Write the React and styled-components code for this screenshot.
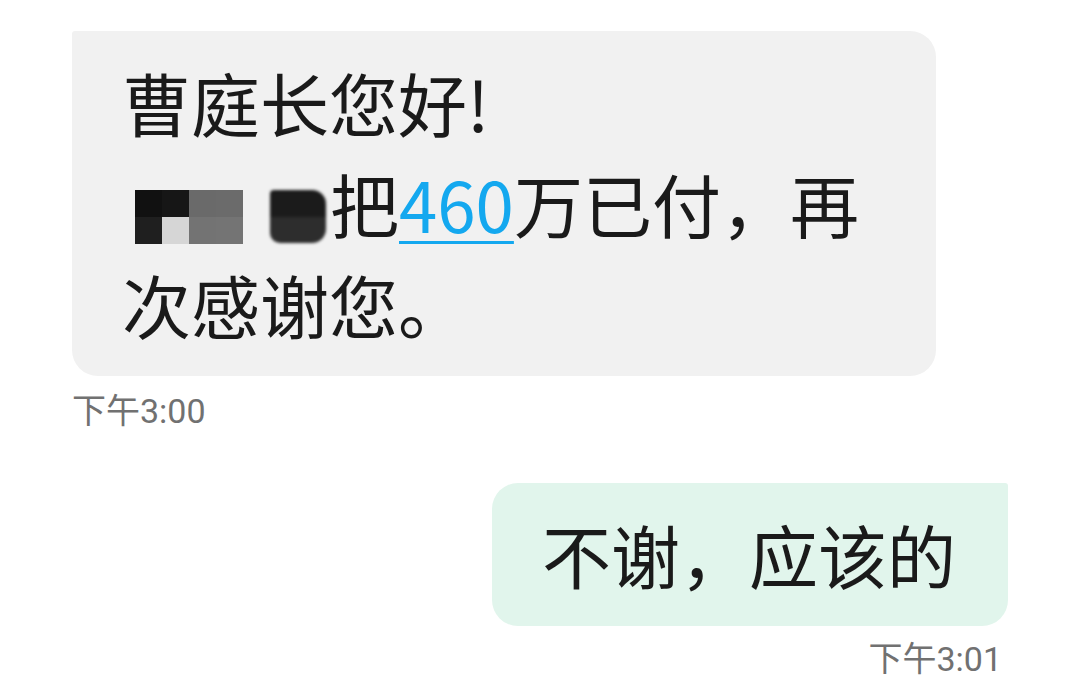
import React from 'react';
import styled, { createGlobalStyle } from 'styled-components';

const GlobalStyle = createGlobalStyle`
    html, body {
        margin: 0;
        padding: 0;
        background: #fff;
    }
    body {
        font-family: "Noto Sans CJK SC", "Noto Sans", sans-serif;
    }
`;

const Thread = styled.div`
    display: flex;
    flex-direction: column;
    padding: 31px 72px 0 72px;
    width: 1080px;
    height: 693px;
    box-sizing: border-box;
    overflow: hidden;
`;

const Row = styled.div`
    display: flex;
    flex-direction: column;
    align-items: ${(p) => (p.mine ? 'flex-end' : 'flex-start')};
    margin-top: ${(p) => p.gap || 0}px;
`;

const Bubble = styled.div`
    box-sizing: border-box;
    width: ${(p) => (p.width ? `${p.width}px` : 'auto')};
    padding: 21px 52px 21px 50px;
    background: ${(p) => (p.mine ? '#e1f5ec' : '#f1f1f1')};
    border-radius: ${(p) => (p.mine ? '26px 3px 26px 26px' : '3px 26px 26px 26px')};
    color: #1a1a1a;
    font-size: 69px;
    line-height: 101px;
    white-space: nowrap;
`;

const Amount = styled.span`
    color: #14a8ef;
    text-decoration: underline;
    text-decoration-thickness: 3px;
    text-underline-offset: 8px;
`;

const Redacted = styled.span`
    display: inline-flex;
    align-items: stretch;
    gap: 27px;
    width: 208px;
    height: 53px;
    margin-top: 37px;
    padding-left: 13px;
    box-sizing: border-box;
    vertical-align: top;
`;

const Mosaic = styled.span`
    display: grid;
    grid-template-columns: repeat(4, 27px);
    grid-template-rows: repeat(2, 27px);
`;

const Cell = styled.span`
    background: ${(p) => p.tone};
`;

const Smudge = styled.span`
    display: flex;
    flex-direction: column;
    width: 56px;
    filter: blur(1.5px);
    border-radius: 4px 14px 14px 10px;
    overflow: hidden;
`;

const SmudgeBand = styled.span`
    flex: 1;
    background: ${(p) => p.tone};
`;

const Time = styled.div`
    margin-top: ${(p) => p.gap}px;
    margin-right: ${(p) => (p.mine ? 6 : 0)}px;
    font-family: Roboto, "Noto Sans CJK SC", sans-serif;
    font-size: 34px;
    line-height: 40px;
    color: #717171;
`;

const mosaicTones = ['#111', '#161616', '#6a6a6a', '#6b6b6b', '#1f1f1f', '#d6d6d6', '#737373', '#747474'];

export default function App() {
    return (
        <>
            <GlobalStyle />
            <Thread>
                <Row>
                    <Bubble width={864}>
                        曹庭长您好!
                        <br />
                        <Redacted>
                            <Mosaic>
                                {mosaicTones.map((t, i) => (
                                    <Cell key={i} tone={t} />
                                ))}
                            </Mosaic>
                            <Smudge>
                                <SmudgeBand tone="#1b1b1b" />
                                <SmudgeBand tone="#2d2d2d" />
                            </Smudge>
                        </Redacted>
                        把<Amount>460</Amount>万已付，再
                        <br />
                        次感谢您。
                    </Bubble>
                    <Time gap={15}>下午3:00</Time>
                </Row>
                <Row mine gap={52}>
                    <Bubble mine>不谢，应该的</Bubble>
                    <Time mine gap={13}>下午3:01</Time>
                </Row>
            </Thread>
        </>
    );
}
